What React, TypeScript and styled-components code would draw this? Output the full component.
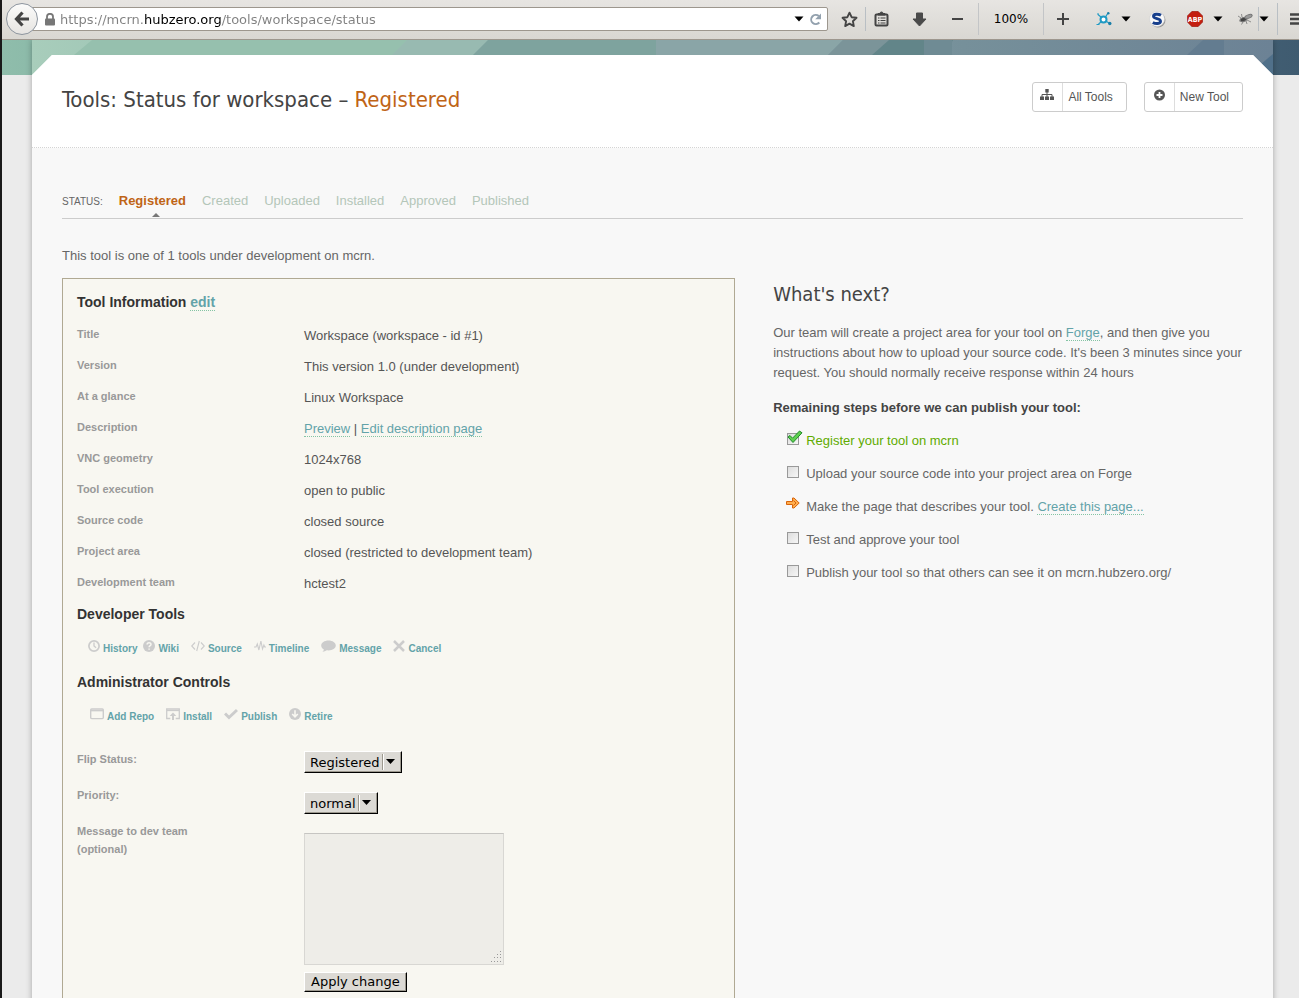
import React from "react";
import styled, { createGlobalStyle } from "styled-components";

const sans = `"Liberation Sans", Arial, Helvetica, sans-serif`;
const ui = `"DejaVu Sans", Verdana, sans-serif`;
const display = `"DejaVu Sans Condensed", "Arial Narrow", sans-serif`;

const GlobalStyle = createGlobalStyle`
  *, *::before, *::after { box-sizing: border-box; }
  body { margin: 0; background: #ebebeb; font-family: ${sans}; font-size: 13px; color: #666; }
  h1, h2, h3, p, ul { margin: 0; padding: 0; }
  svg { display: block; flex: none; }
`;

/* ---------- window ---------- */
const Window = styled.div`
  display: flex;
  flex-direction: column;
  height: 100vh;
  overflow: hidden;
  border-left: 2px solid #1a1a1a;
`;
const Toolbar = styled.header`
  display: flex;
  align-items: center;
  flex: none;
  height: 40px;
  padding-bottom: 1px;
  background: linear-gradient(#e7e5e2, #d9d7d2);
  border-bottom: 1px solid #9d978e;
  font-family: ${ui};
  color: #000;
`;
const BackButton = styled.button`
  display: flex;
  align-items: center;
  justify-content: center;
  flex: none;
  width: 32px;
  height: 32px;
  margin-left: 4px;
  padding: 0;
  z-index: 1;
  border: 1px solid #8d959f;
  border-radius: 50%;
  background: linear-gradient(#fbfbfa, #e6e4e1);
`;
const UrlBar = styled.form`
  display: flex;
  align-items: center;
  flex: 1;
  min-width: 0;
  height: 24px;
  margin-left: -6px;
  padding: 0 5px 0 12px;
  gap: 5px;
  background: #fff;
  border: 1px solid #9d978e;
  border-radius: 0 2px 2px 0;
`;
const UrlInput = styled.input`
  flex: 1;
  min-width: 0;
  height: 20px;
  padding: 0;
  border: 0;
  outline: 0;
  font: 13px ${ui};
  color: transparent;
  caret-color: #000;
  background: linear-gradient(90deg, #808080 84px, #000 84px, #000 162px, #808080 162px);
  -webkit-background-clip: text;
  background-clip: text;
`;
const Tool = styled.button<{ $w: number; $ml?: number; $line?: "left" | "right" }>`
  display: flex;
  align-items: center;
  justify-content: center;
  flex: none;
  width: ${p => p.$w}px;
  height: 24px;
  margin-left: ${p => p.$ml ?? 0}px;
  padding: 0;
  border: 0;
  ${p => p.$line && `border-${p.$line}: 1px solid #b9bfc4;`}
  background: none;
  color: #444;
`;
const BurgerButton = styled(Tool)`
  justify-content: flex-start;
  padding-left: 12px;
  height: 32px;
  overflow: hidden;
`;
const ZoomLevel = styled.button`
  flex: none;
  width: 66px;
  height: 32px;
  margin-left: 6px;
  padding: 0;
  background: none;
  border: 1px solid #c3c5c7;
  border-width: 0 1px;
  font: 12px ${ui};
  color: #000;
`;

/* ---------- page ---------- */
const Viewport = styled.div`
  flex: 1;
  min-height: 0;
  overflow: hidden;
  background: linear-gradient(90deg, #8fbdab, #6a9996 35%, #55788a 70%, #3f5b70) no-repeat 0 0 / 100% 35px #ebebeb;
`;
const Frame = styled.div`
  position: relative;
  margin: 0 26px 0 30px;
  padding-top: 15px;
  box-shadow: 0 0 6px rgba(0, 0, 0, 0.3);
  background: #f8f8f8;
`;
const Banner = styled.svg`
  position: absolute;
  top: 0;
  left: 0;
  width: 100%;
  height: 36px;
`;
const Sheet = styled.div`
  position: relative;
  background: #f8f8f8;
  clip-path: polygon(20px 0, calc(100% - 20px) 0, 100% 20px, 100% 100%, 0 100%, 0 20px);
`;
const PageHeader = styled.div`
  display: flex;
  justify-content: space-between;
  padding: 27px 30px 29px;
  background: #fff;
  border-bottom: 1px dotted #d4d4d4;
`;
const Title = styled.h1`
  font: 400 22px/36px ${display};
  color: #444;
`;
const TitleState = styled.span`
  color: #bf6416;
`;
const HeaderLinks = styled.nav`
  display: flex;
  gap: 17px;
`;
const HeaderLink = styled.a`
  display: flex;
  height: 30px;
  padding-right: 13px;
  border: 1px solid #ccc;
  border-radius: 3px;
  font-size: 12px;
  line-height: 28px;
  color: #555;
  text-decoration: none;
`;
const HeaderIcon = styled.span`
  width: 30px;
  margin-right: 5px;
  padding: 5px 0 0 7px;
  border-right: 1px solid #ddd;
`;
const Content = styled.main`
  padding: 42px 30px 40px;
`;
const StatusBar = styled.div`
  display: flex;
  gap: 16px;
  padding-bottom: 4px;
  line-height: 22px;
  border-bottom: 1px solid #ccc;
`;
const StatusLabel = styled.span`
  font-size: 10px;
  line-height: 24px;
  text-transform: uppercase;
`;
const StatusItem = styled.span<{ $active?: boolean }>`
  position: relative;
  color: ${p => (p.$active ? "#bf6416" : "#b4c6b9")};
  font-weight: ${p => (p.$active ? 700 : 400)};
  ${p => p.$active && `&::after {
    content: "";
    position: absolute;
    left: 50%;
    top: 23px;
    border: 4px solid transparent;
    border-top: 0;
    border-bottom-color: #777;
  }`}
`;
const Intro = styled.p`
  margin: 27px 0 12px;
  line-height: 20px;
`;
const Columns = styled.div`
  display: grid;
  grid-template-columns: 57% minmax(0, 1fr);
  gap: 38px;
  align-items: start;
`;
const Link = styled.a`
  color: #63a3a9;
  text-decoration: none;
  border-bottom: 1px dotted #84c4a4;
`;

/* ---------- tool information ---------- */
const Panel = styled.section`
  padding: 13px 14px 60px;
  background: #f8f7f1;
  border: 1px solid #b0a993;
`;
const PanelHeading = styled.h2`
  margin-bottom: 14px;
  font-size: 14px;
  line-height: 20px;
  color: #333;
`;
const InfoTable = styled.table`
  width: 100%;
  margin: -7px 0 6px;
  border-collapse: collapse;
  table-layout: fixed;
`;
const InfoLabel = styled.th`
  width: 227px;
  height: 31px;
  padding: 0 0 2px;
  text-align: left;
  font-size: 11px;
  color: #999;
`;
const InfoValue = styled.td`
  padding: 1px 0 0;
  color: #555;
`;
const Actions = styled.ul<{ $indent: number }>`
  && {
    display: flex;
    flex-wrap: wrap;
    gap: 12px;
    margin: 0 0 13px;
    padding: 1px 0 0 ${p => p.$indent}px;
    list-style: none;
  }
`;
const Action = styled.li<{ $tight?: boolean }>`
  ${p => p.$tight && "margin-right: -6px;"}
`;
const ActionLink = styled.a`
  display: flex;
  gap: 3px;
  font-size: 10px;
  font-weight: 700;
  line-height: 20px;
  color: #63a3a9;
  text-decoration: none;
  svg { margin-top: 1px; color: #ccc; }
`;
const FormArea = styled.form`
  margin-top: 23px;
`;
const Field = styled.div`
  display: grid;
  grid-template-columns: 127px minmax(0, 1fr);
  column-gap: 100px;
  min-height: 36px;
`;
const FieldLabel = styled.label`
  font-size: 11px;
  font-weight: 700;
  line-height: 18px;
  color: #999;
`;
const Control = styled.div<{ $drop: number }>`
  padding-top: ${p => p.$drop}px;
`;
const SelectBox = styled.div`
  position: relative;
  display: inline-block;
  vertical-align: top;
`;
const SelectArrow = styled.svg`
  position: absolute;
  right: 1px;
  top: 2px;
  pointer-events: none;
`;
const Select = styled.select`
  display: block;
  appearance: none;
  height: 22px;
  padding: 0 21px 0 5px;
  background: #dcdad5;
  border: 1px solid #000;
  border-top-color: #fff;
  border-left-color: #fff;
  border-radius: 0;
  box-shadow: inset -1px -1px #9d998f;
  font: 13px ${ui};
  color: #000;
`;
const MessageBox = styled.div`
  position: relative;
  width: 200px;
  height: 132px;
  margin-bottom: 7px;
`;
const Message = styled.textarea`
  display: block;
  width: 100%;
  height: 100%;
  resize: none;
  background: #eeede8;
  border: 1px solid #d8d7d3;
  border-top-color: #c6c5c2;
`;
const Grip = styled.svg`
  position: absolute;
  right: 2px;
  bottom: 2px;
`;
const Apply = styled.button`
  height: 20px;
  padding: 0 6px;
  background: #dcdad5;
  border: 1px solid #000;
  border-top-color: #fff;
  border-left-color: #fff;
  box-shadow: inset -1px -1px #9d998f;
  font: 13px/16px ${ui};
  color: #000;
`;

/* ---------- next steps ---------- */
const NextHeading = styled.h2`
  margin-bottom: 13px;
  font: 400 20px/32px ${display};
  color: #444;
`;
const NextText = styled.p`
  line-height: 20px;
`;
const Remaining = styled.h3`
  margin: 15px 0 12px;
  font-size: 13px;
  line-height: 20px;
  color: #444;
`;
const Steps = styled.ul`
  && {
    list-style: none;
    padding-left: 14px;
  }
`;
const Step = styled.li<{ $done?: boolean }>`
  display: flex;
  gap: 7px;
  height: 33px;
  line-height: 22px;
  color: ${p => (p.$done ? "#5fab00" : "#666")};
`;
const Marker = styled.span`
  position: relative;
  flex: none;
  width: 12px;
  svg { position: absolute; left: -1px; top: 0; }
`;
const Tick = styled.input`
  display: block;
  appearance: none;
  width: 12px;
  height: 12px;
  margin: 3px 0 0;
  border: 1px solid #999;
  background: linear-gradient(135deg, #ddd, #f6f6f6);
`;

/* ---------- icons ---------- */
const Caret = () => (
  <svg width="10" height="6" viewBox="0 0 10 6"><path d="M0.5 0.5h9L5 5.5z" fill="#000" /></svg>
);
const icons: Record<string, React.ReactNode> = {
  history: <svg width="12" height="12" viewBox="0 0 12 12" fill="none" stroke="currentColor" strokeWidth="1.7"><circle cx="6" cy="6" r="5.1" /><path d="M6 2.6V6l2.1 1.8" strokeWidth="1.3" /></svg>,
  wiki: <svg width="12" height="12" viewBox="0 0 12 12"><circle cx="6" cy="6" r="6" fill="currentColor" /><path d="M4.1 4.6C4.1 2 8 2.2 8 4.4 8 5.7 6.1 5.7 6.1 7.3M6.1 8.4v1.4" fill="none" stroke="#f8f7f1" strokeWidth="1.5" /></svg>,
  source: <svg width="14" height="12" viewBox="0 0 14 12" fill="none" stroke="currentColor" strokeWidth="1.1"><path d="M4 2.5L.7 6 4 9.5M10 2.5L13.3 6 10 9.5M8.3 1L5.7 11" /></svg>,
  timeline: <svg width="12" height="12" viewBox="0 0 12 12" fill="none" stroke="currentColor" strokeWidth="1.1"><path d="M0 7h2l1.3-3 1.6 6L6.9 1l1.6 8 1.4-4 .8 2H12" /></svg>,
  message: <svg width="15" height="12" viewBox="0 0 15 12"><path d="M7.5.5C3.400.5.2 2.700.2 5.500c0 1.700 1 3 2.700 3.900C2.800 10.400 2 11 1.400 11.700c1.900 0 3.300-.5 4.300-1.400.6.1 1.200.1 1.800.1 4.100 0 7.300-2.200 7.300-4.900S11.600.5 7.500.5z" fill="currentColor" /></svg>,
  cancel: <svg width="12" height="12" viewBox="0 0 12 12" stroke="currentColor" strokeWidth="2.5"><path d="M1 1l10 10M11 1L1 11" /></svg>,
  repo: <svg width="14" height="12" viewBox="0 0 14 12" fill="none" stroke="currentColor"><rect x=".7" y="1" width="12.6" height="9.6" rx="1" strokeWidth="1.4" /><path d="M1 2.6h12" strokeWidth="1.5" /></svg>,
  install: <svg width="14" height="12" viewBox="0 0 14 12" fill="none" stroke="currentColor"><path d="M4.3 10.500H.7V1h12.600v9.500H9.700" strokeWidth="1.3" /><path d="M1 2.500h12" strokeWidth="1.3" /><path d="M7 12V7" strokeWidth="2" /><path d="M3.700 8L7 4.600 10.300 8z" fill="currentColor" stroke="none" /></svg>,
  publish: <svg width="14" height="12" viewBox="0 0 14 12" fill="none" stroke="currentColor" strokeWidth="3"><path d="M1 5.500l4 4L13 2" /></svg>,
  retire: <svg width="12" height="12" viewBox="0 0 12 12"><circle cx="6" cy="6" r="6" fill="currentColor" /><path d="M6 2.300v6M3.200 6L6 8.900 8.800 6" fill="none" stroke="#f8f7f1" strokeWidth="1.6" /></svg>,
};

const ActionList = ({ items, indent }: { items: [string, string][]; indent: number }) => (
  <Actions $indent={indent}>
    {items.map(([icon, label]) => (
      <Action key={label} $tight={icon === "history"}>
        <ActionLink href="#">{icons[icon]}{label}</ActionLink>
      </Action>
    ))}
  </Actions>
);

const info: [string, React.ReactNode][] = [
  ["Title", "Workspace (workspace - id #1)"],
  ["Version", "This version 1.0 (under development)"],
  ["At a glance", "Linux Workspace"],
  ["Description", <><Link href="#">Preview</Link> | <Link href="#">Edit description page</Link></>],
  ["VNC geometry", "1024x768"],
  ["Tool execution", "open to public"],
  ["Source code", "closed source"],
  ["Project area", "closed (restricted to development team)"],
  ["Development team", "hctest2"],
];

const Dropdown = ({ id, options }: { id: string; options: string[] }) => (
  <SelectBox>
    <Select id={id}>{options.map(o => <option key={o}>{o}</option>)}</Select>
    <SelectArrow width="20" height="18" viewBox="0 0 20 18">
      <path d="M1.5 1v16" stroke="#9d998f" /><path d="M2.5 1v16" stroke="#fff" />
      <path d="M5 6h9L9.5 11z" fill="#000" />
    </SelectArrow>
  </SelectBox>
);

const BrowserToolbar = () => (
  <Toolbar>
    <BackButton type="button" aria-label="Back">
      <svg width="16" height="16" viewBox="0 0 16 16" fill="none" stroke="#444" strokeWidth="3.2"><path d="M8.5 1.500L2.500 8l6 6.500M3 8h12" /></svg>
    </BackButton>
    <UrlBar>
      <svg width="10" height="13" viewBox="0 0 10 13"><rect y="5.5" width="10" height="7" rx="1" fill="#777" /><path d="M2 6V3.800a3 3 0 0 1 6 0V6" fill="none" stroke="#777" strokeWidth="1.8" /></svg>
      <UrlInput aria-label="Address" defaultValue="https://mcrn.hubzero.org/tools/workspace/status" />
      <Caret />
      <svg width="13" height="13" viewBox="0 0 13 13"><path d="M10.3 9.500A4.600 4.600 0 1 1 9.800 3" fill="none" stroke="#93a1ae" strokeWidth="2" /><path d="M12 .5v5.800H6.200z" fill="#93a1ae" /></svg>
    </UrlBar>
    <Tool type="button" $w={32} $ml={6} $line="right" aria-label="Bookmark">
      <svg width="17" height="17" viewBox="0 0 17 17"><path d="M8.5 1.700l2.100 4.500 4.900.6-3.600 3.400.9 4.900-4.300-2.400-4.300 2.400.9-4.900L1.500 6.800l4.900-.6z" fill="none" stroke="#444" strokeWidth="1.9" strokeLinejoin="round" /></svg>
    </Tool>
    <Tool type="button" $w={30} aria-label="Reading list">
      <svg width="15" height="16" viewBox="0 0 15 16"><rect x="1.5" y="3.500" width="12" height="11" rx="1" fill="none" stroke="#444" strokeWidth="2" /><path d="M4 4V2.500h2a1.500 1.500 0 0 1 3 0h2V4z" fill="#444" stroke="#444" /><path d="M4 7h1.500M4 9.500h1.500M4 12h1.500M6.500 7h5M6.500 9.500h5M6.500 12h5" stroke="#444" strokeWidth="1.2" /></svg>
    </Tool>
    <Tool type="button" $w={46} aria-label="Downloads">
      <svg width="15" height="15" viewBox="0 0 15 15"><path d="M4.5 1h6v6H14L7.500 14 1 7h3.500z" fill="#4a4a4a" stroke="#4a4a4a" strokeLinejoin="round" /></svg>
    </Tool>
    <Tool type="button" $w={30} aria-label="Zoom out">
      <svg width="11" height="12" viewBox="0 0 11 12"><path d="M0 6h11" stroke="#444" strokeWidth="2" /></svg>
    </Tool>
    <ZoomLevel type="button">100%</ZoomLevel>
    <Tool type="button" $w={38} aria-label="Zoom in">
      <svg width="12" height="12" viewBox="0 0 12 12"><path d="M0 6h12M6 0v12" stroke="#444" strokeWidth="2" /></svg>
    </Tool>
    <Tool type="button" $w={24} $ml={10} aria-label="Network add-on">
      <svg width="16" height="14" viewBox="0 0 16 14" fill="none" stroke="#1f9ac4"><circle cx="7.5" cy="7.500" r="3" strokeWidth="2" fill="#fff" /><path d="M2 2.500l3.500 3M9.500 5L12 1M5 10l-2.500 2M10.500 9.500L13 11" strokeWidth="1.2" /><circle cx="13.8" cy="11.500" r="1.700" fill="#1a7fa8" stroke="none" /><circle cx="12.3" cy="1.200" r="1.200" fill="#1a7fa8" stroke="none" /><path d="M1 2h2M.5 12.500h3" strokeWidth="1.2" /></svg>
    </Tool>
    <Tool type="button" $w={20} aria-label="Network add-on menu"><Caret /></Tool>
    <Tool type="button" $w={26} $ml={8} aria-label="Startpage">
      <svg width="17" height="17" viewBox="0 0 17 17"><circle cx="9" cy="9" r="7.500" fill="#999" /><circle cx="8" cy="8" r="7.500" fill="#f8f8f8" stroke="#d0d0d0" strokeWidth=".6" /><path d="M12 4.300C9.500 2.800 4.500 2.800 4.500 5.300c0 3 7 1.800 7 4.900 0 2.700-4.800 3-7.700 1.200" fill="none" stroke="#173f8c" strokeWidth="2.900" /></svg>
    </Tool>
    <Tool type="button" $w={26} $ml={12} aria-label="Adblock Plus">
      <svg width="16" height="16" viewBox="0 0 16 16"><path d="M5 .3h6L15.700 5v6L11 15.700H5L.3 11V5z" fill="#c41f10" stroke="#8f1a10" strokeWidth=".6" /><text x="8" y="11" textAnchor="middle" fontFamily="DejaVu Sans Condensed, sans-serif" fontWeight="700" fontSize="7" fill="#fff">ABP</text></svg>
    </Tool>
    <Tool type="button" $w={20} aria-label="Adblock Plus menu"><Caret /></Tool>
    <Tool type="button" $w={27} $ml={4} $line="right" aria-label="Firebug">
      <svg width="15" height="12" viewBox="0 0 15 12" fill="none" stroke="#777"><ellipse cx="5.5" cy="6.500" rx="3.500" ry="2" fill="#444" transform="rotate(-20 5.5 6.5)" /><ellipse cx="10.5" cy="3.500" rx="3.800" ry="1.700" fill="#999" transform="rotate(-20 10.5 3.5)" /><path d="M0 3l3 2M1 8l2-.5M5 9l-1.500 2.500M8 8l1 3M9 7l4 2M4 4L3.500 1" strokeWidth=".8" /></svg>
    </Tool>
    <Tool type="button" $w={10} aria-label="Firebug menu"><Caret /></Tool>
    <BurgerButton type="button" $w={22} $ml={8} $line="left" aria-label="Menu">
      <svg width="16" height="14" viewBox="0 0 16 14"><path d="M0 2.500h16M0 7h16M0 11.500h16" stroke="#444" strokeWidth="2.400" /></svg>
    </BurgerButton>
  </Toolbar>
);

export default function App() {
  return (
    <Window>
      <GlobalStyle />
      <BrowserToolbar />
      <Viewport>
        <Frame>
          <Banner viewBox="0 0 1241 36" preserveAspectRatio="none">
            <defs>
              <linearGradient id="band">
                <stop offset="0" stopColor="#a8cdbb" />
                <stop offset=".12" stopColor="#9cc3b4" />
                <stop offset=".3" stopColor="#98bab1" />
                <stop offset=".5" stopColor="#8aa9a8" />
                <stop offset=".75" stopColor="#76909a" />
                <stop offset="1" stopColor="#6c8295" />
              </linearGradient>
            </defs>
            <path d="M0 0h1241v36H0z" fill="url(#band)" />
            <path d="M60 0h320l-15 15H42z" fill="#96c0ae" />
            <path d="M375 0h81l-15 15h-81z" fill="#98bab1" />
            <path d="M456 0h168v15H441z" fill="#7ea39e" />
            <path d="M624 0h187l-15 15H624z" fill="#8aa5a7" />
            <path d="M811 0h77l-15 15h-77z" fill="#7b9499" />
            <path d="M857 0h64l-8 15h-73z" fill="#628589" />
            <path d="M892 0h28v15h-28z" fill="#6f8b94" />
            <path d="M1171 0h21v15h-37z" fill="#637c90" />
            <path d="M1241 14v22l-13-11z" fill="#50708a" />
          </Banner>
          <Sheet>
            <PageHeader>
              <Title>Tools: Status for workspace – <TitleState>Registered</TitleState></Title>
              <HeaderLinks>
                <HeaderLink href="#">
                  <HeaderIcon>
                    <svg width="14" height="13" viewBox="0 0 14 13" fill="#555"><path d="M5.300 1h3.400v3.500H5.300zM0 8.500h4V12H0zM5 8.500h4V12H5zM10 8.500h4V12h-4z" /><path d="M7 4v5M2 9V6.500h10V9" fill="none" stroke="#555" /></svg>
                  </HeaderIcon>
                  All Tools
                </HeaderLink>
                <HeaderLink href="#">
                  <HeaderIcon>
                    <svg width="14" height="14" viewBox="0 0 14 14"><circle cx="7.500" cy="7" r="5.500" fill="#555" /><path d="M7.500 4v6M4.500 7h6" stroke="#fff" strokeWidth="1.800" /></svg>
                  </HeaderIcon>
                  New Tool
                </HeaderLink>
              </HeaderLinks>
            </PageHeader>
            <Content>
              <StatusBar>
                <StatusLabel>Status:</StatusLabel>
                <StatusItem $active>Registered</StatusItem>
                {["Created", "Uploaded", "Installed", "Approved", "Published"].map(s => (
                  <StatusItem key={s}>{s}</StatusItem>
                ))}
              </StatusBar>
              <Intro>This tool is one of 1 tools under development on mcrn.</Intro>
              <Columns>
                <Panel>
                  <PanelHeading>Tool Information <Link href="#">edit</Link></PanelHeading>
                  <InfoTable>
                    <tbody>
                      {info.map(([label, value]) => (
                        <tr key={label}>
                          <InfoLabel scope="row">{label}</InfoLabel>
                          <InfoValue>{value}</InfoValue>
                        </tr>
                      ))}
                    </tbody>
                  </InfoTable>
                  <PanelHeading>Developer Tools</PanelHeading>
                  <ActionList indent={11} items={[["history", "History"], ["wiki", "Wiki"], ["source", "Source"], ["timeline", "Timeline"], ["message", "Message"], ["cancel", "Cancel"]]} />
                  <PanelHeading>Administrator Controls</PanelHeading>
                  <ActionList indent={13} items={[["repo", "Add Repo"], ["install", "Install"], ["publish", "Publish"], ["retire", "Retire"]]} />
                  <FormArea>
                    <Field>
                      <FieldLabel htmlFor="status">Flip Status:</FieldLabel>
                      <Control $drop={1}><Dropdown id="status" options={["Registered"]} /></Control>
                    </Field>
                    <Field>
                      <FieldLabel htmlFor="priority">Priority:</FieldLabel>
                      <Control $drop={6}><Dropdown id="priority" options={["normal"]} /></Control>
                    </Field>
                    <Field>
                      <FieldLabel htmlFor="message">Message to dev team (optional)</FieldLabel>
                      <Control $drop={11}>
                        <MessageBox>
                          <Message id="message" />
                          <Grip width="12" height="12" viewBox="0 0 12 12" fill="#999">
                            <path d="M10 0h1v1h-1zM10 3h1v1h-1zM7 3h1v1H7zM10 6h1v1h-1zM7 6h1v1H7zM4 6h1v1H4zM10 10h1v1h-1zM7 10h1v1H7zM4 10h1v1H4zM1 10h1v1H1z" />
                          </Grip>
                        </MessageBox>
                        <Apply type="button">Apply change</Apply>
                      </Control>
                    </Field>
                  </FormArea>
                </Panel>
                <section>
                  <NextHeading>What's next?</NextHeading>
                  <NextText>
                    Our team will create a project area for your tool on <Link href="#">Forge</Link>, and then give you instructions about how to upload your source code. It's been 3 minutes since your request. You should normally receive response within 24 hours
                  </NextText>
                  <Remaining>Remaining steps before we can publish your tool:</Remaining>
                  <Steps>
                    <Step $done>
                      <Marker>
                        <Tick type="checkbox" id="s1" defaultChecked />
                        <svg width="17" height="14" viewBox="0 0 17 14"><path d="M2 7l2-1.500 2.500 2.700L13.500 1 16 2.800 7 12.500z" fill="#5fd04f" stroke="#1f8a2a" /></svg>
                      </Marker>
                      <label htmlFor="s1">Register your tool on mcrn</label>
                    </Step>
                    <Step>
                      <Marker><Tick type="checkbox" id="s2" /></Marker>
                      <label htmlFor="s2">Upload your source code into your project area on Forge</label>
                    </Step>
                    <Step>
                      <Marker>
                        <svg width="14" height="14" viewBox="0 0 14 14"><path d="M.5 5.500h6V2H8l5.200 5L8 12H6.500V8.500h-6z" fill="#ffae4d" stroke="#d8640c" /><path d="M7.500 4.500L10 7 7.500 9.500" fill="none" stroke="#d8640c" /></svg>
                      </Marker>
                      <span>Make the page that describes your tool. <Link href="#">Create this page...</Link></span>
                    </Step>
                    <Step>
                      <Marker><Tick type="checkbox" id="s4" /></Marker>
                      <label htmlFor="s4">Test and approve your tool</label>
                    </Step>
                    <Step>
                      <Marker><Tick type="checkbox" id="s5" /></Marker>
                      <label htmlFor="s5">Publish your tool so that others can see it on mcrn.hubzero.org/</label>
                    </Step>
                  </Steps>
                </section>
              </Columns>
            </Content>
          </Sheet>
        </Frame>
      </Viewport>
    </Window>
  );
}
